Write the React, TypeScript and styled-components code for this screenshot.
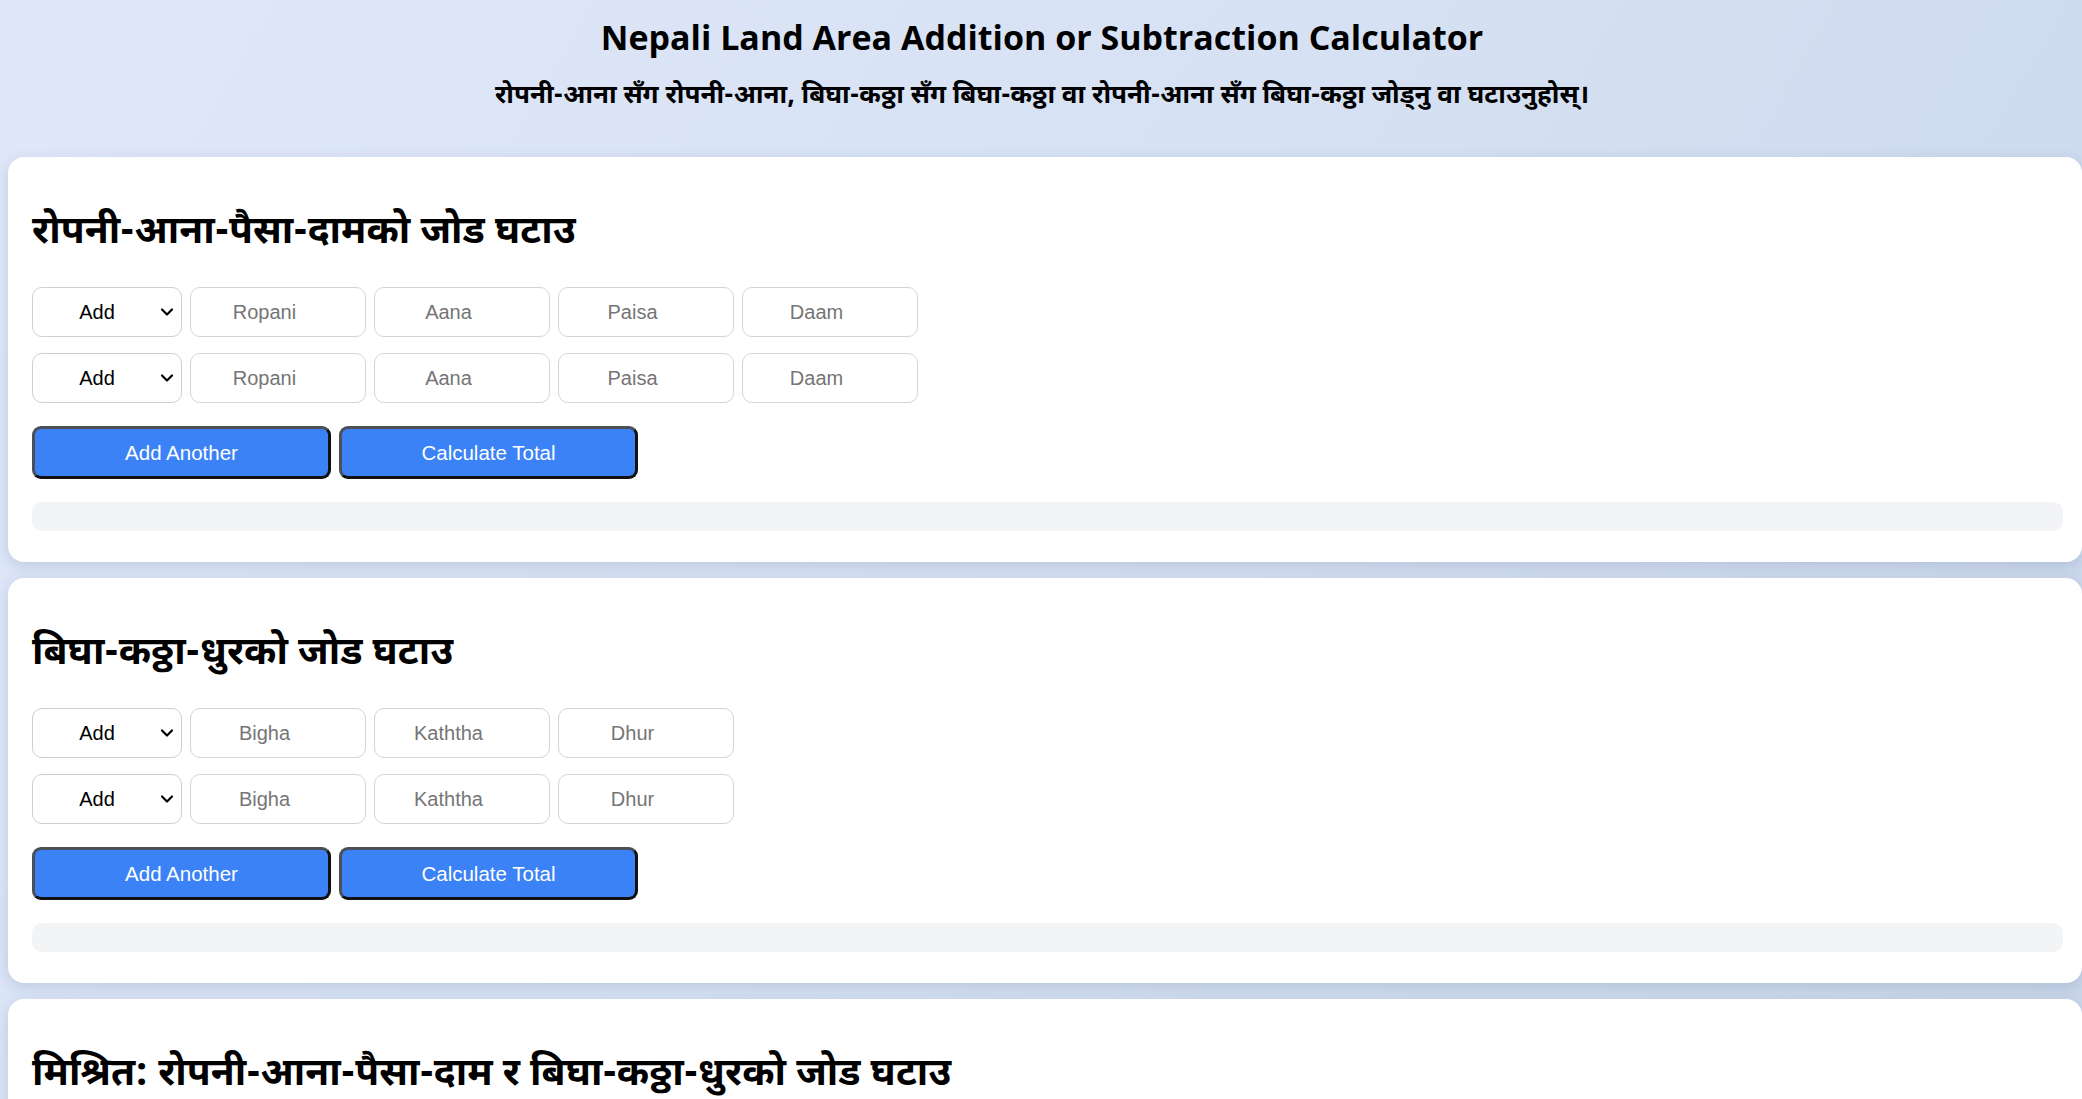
import React from "react";
import styled, { createGlobalStyle } from "styled-components";
import { ChevronDown } from "lucide-react";

const GlobalStyle = createGlobalStyle`
  html, body {
    margin: 0;
    padding: 0;
  }
  body {
    min-height: 100vh;
    overflow-x: hidden;
    background: linear-gradient(120deg, #dfe8f9 0%, #d6e1f3 50%, #c9d6ea 100%);
    background-attachment: fixed;
    font-family: "Liberation Sans", Arial, sans-serif;
    color: #000;
  }
`;

const devFont = `"Noto Sans Devanagari", "Nirmala UI", "Lohit Devanagari", "Noto Sans", "Open Sans", sans-serif`;

const Page = styled.div`
  padding: 15px 0 40px 8px;
  display: flex;
  flex-direction: column;
`;

const Header = styled.header`
  display: flex;
  flex-direction: column;
  align-items: center;
  gap: 20px;
  margin-bottom: 42px;
  padding-right: 6px;
`;

const Title = styled.h1`
  margin: 0;
  font-family: "Open Sans", ${devFont};
  font-size: 34px;
  line-height: 44px;
  font-weight: 700;
  letter-spacing: 0;
`;

const Subtitle = styled.p`
  margin: 0;
  font-family: ${devFont};
  font-size: 26px;
  line-height: 36px;
  font-weight: 700;
`;

const Cards = styled.div`
  display: flex;
  flex-direction: column;
  gap: 16px;
`;

const Card = styled.section`
  background: #fff;
  border-radius: 16px;
  padding: 24px 19px 31px 24px;
  box-shadow: 0 4px 14px rgba(60, 80, 120, 0.18);
`;

const CardTitle = styled.h2`
  margin: 31px 0 32px;
  font-family: ${devFont};
  font-size: 39px;
  line-height: 43px;
  font-weight: 700;
`;

const Rows = styled.div`
  display: flex;
  flex-direction: column;
  gap: 16px;
`;

const Row = styled.div`
  display: flex;
  gap: 8px;
`;

const SelectWrap = styled.div`
  position: relative;
  width: 150px;
  height: 50px;
  flex: none;
`;

const Select = styled.select`
  appearance: none;
  -webkit-appearance: none;
  box-sizing: border-box;
  width: 100%;
  height: 100%;
  border: 1px solid #cfcfcf;
  border-radius: 10px;
  background: #fff;
  padding: 0 30px 0 10px;
  font-family: "Liberation Sans", Arial, sans-serif;
  font-size: 20px;
  color: #000;
  text-align: center;
  text-align-last: center;
`;

const Chevron = styled.span`
  position: absolute;
  right: 5px;
  top: 50%;
  transform: translateY(-50%);
  display: flex;
  pointer-events: none;
  color: #000;
`;

const NumInput = styled.input`
  box-sizing: border-box;
  width: 176px;
  height: 50px;
  flex: none;
  border: 1px solid #d4d4d4;
  border-radius: 10px;
  padding: 0 18px 0 6px;
  font-family: "Liberation Sans", Arial, sans-serif;
  font-size: 20px;
  text-align: center;
  color: #000;
  background: #fff;
  &::placeholder {
    color: #757575;
  }
  &::-webkit-inner-spin-button {
    opacity: 0;
  }
`;

const Actions = styled.div`
  display: flex;
  gap: 8px;
  margin-top: 23px;
`;

const Button = styled.button`
  box-sizing: border-box;
  width: 299px;
  height: 53px;
  background: #3b82f6;
  color: #fff;
  border: 3px solid;
  border-color: #4b4f57 #111 #111 #4b4f57;
  border-radius: 9px;
  font-family: "Liberation Sans", Arial, sans-serif;
  font-size: 20.5px;
  cursor: pointer;
`;

const Result = styled.div`
  margin-top: 23px;
  height: 29px;
  background: #f3f4f6;
  border-radius: 10px;
`;

type Section = {
  title: string;
  fields: string[];
};

const sections: Section[] = [
  { title: "रोपनी-आना-पैसा-दामको जोड घटाउ", fields: ["Ropani", "Aana", "Paisa", "Daam"] },
  { title: "बिघा-कठ्ठा-धुरको जोड घटाउ", fields: ["Bigha", "Kaththa", "Dhur"] },
  {
    title: "मिश्रित: रोपनी-आना-पैसा-दाम र बिघा-कठ्ठा-धुरको जोड घटाउ",
    fields: ["Ropani", "Aana", "Paisa", "Daam", "Bigha", "Kaththa", "Dhur"],
  },
];

function EntryRow({ fields }: { fields: string[] }) {
  return (
    <Row>
      <SelectWrap>
        <Select defaultValue="add">
          <option value="add">Add</option>
          <option value="subtract">Subtract</option>
        </Select>
        <Chevron>
          <ChevronDown size={20} strokeWidth={2.6} />
        </Chevron>
      </SelectWrap>
      {fields.map((f) => (
        <NumInput key={f} type="number" placeholder={f} />
      ))}
    </Row>
  );
}

export default function App() {
  return (
    <>
      <GlobalStyle />
      <Page>
        <Header>
          <Title>Nepali Land Area Addition or Subtraction Calculator</Title>
          <Subtitle>
            रोपनी-आना सँग रोपनी-आना, बिघा-कठ्ठा सँग बिघा-कठ्ठा वा रोपनी-आना सँग बिघा-कठ्ठा जोड्नु वा घटाउनुहोस्।
          </Subtitle>
        </Header>
        <Cards>
          {sections.map((s) => (
            <Card key={s.title}>
              <CardTitle>{s.title}</CardTitle>
              <Rows>
                <EntryRow fields={s.fields} />
                <EntryRow fields={s.fields} />
              </Rows>
              <Actions>
                <Button type="button">Add Another</Button>
                <Button type="button">Calculate Total</Button>
              </Actions>
              <Result />
            </Card>
          ))}
        </Cards>
      </Page>
    </>
  );
}
